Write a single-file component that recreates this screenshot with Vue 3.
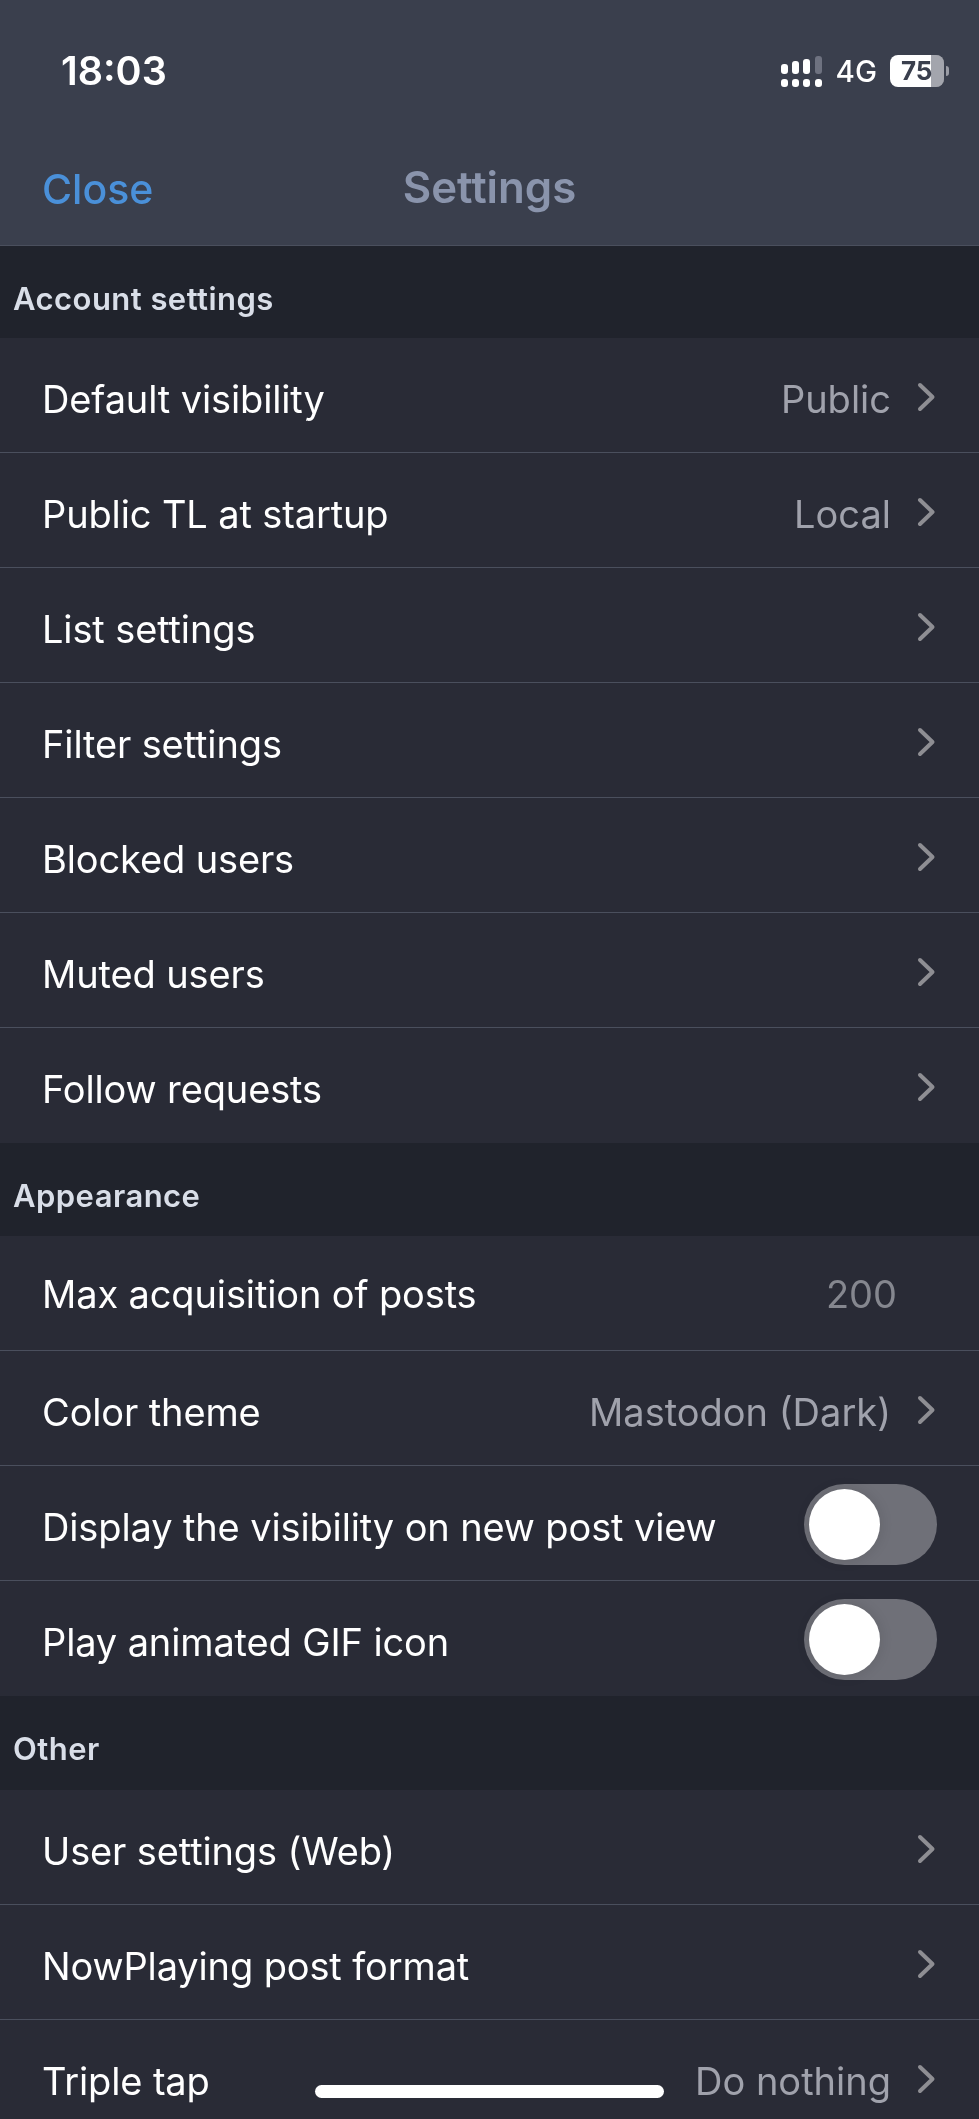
<script setup>
const groups = [
  { title: 'Account settings', rows: [
    { label: 'Default visibility', value: 'Public', chevron: true },
    { label: 'Public TL at startup', value: 'Local', chevron: true },
    { label: 'List settings', chevron: true },
    { label: 'Filter settings', chevron: true },
    { label: 'Blocked users', chevron: true },
    { label: 'Muted users', chevron: true },
    { label: 'Follow requests', chevron: true },
  ]},
  { title: 'Appearance', rows: [
    { label: 'Max acquisition of posts', input: '200' },
    { label: 'Color theme', value: 'Mastodon (Dark)', chevron: true },
    { label: 'Display the visibility on new post view', toggle: true },
    { label: 'Play animated GIF icon', toggle: true },
  ]},
  { title: 'Other', rows: [
    { label: 'User settings (Web)', chevron: true },
    { label: 'NowPlaying post format', chevron: true },
    { label: 'Triple tap', value: 'Do nothing', chevron: true },
  ]},
]
const dots = [0, 1, 2, 3]
</script>

<template>
  <div class="screen">
    <header class="head">
      <div class="status">
        <span class="time">18:03</span>
        <div class="indicators">
          <div class="signal">
            <div v-for="d in dots" :key="d" class="col">
              <i class="bar" :class="'b' + d"></i>
              <i class="dot"></i>
            </div>
          </div>
          <span class="net">4G</span>
          <div class="battery">
            <span class="pct">75</span>
            <i class="rest"></i>
          </div>
          <i class="cap"></i>
        </div>
      </div>
      <nav class="nav">
        <span class="close">Close</span>
        <span class="title">Settings</span>
      </nav>
    </header>

    <section v-for="g in groups" :key="g.title">
      <h2 class="section">{{ g.title }}</h2>
      <div v-for="r in g.rows" :key="r.label" class="row" :class="{ 'has-input': r.input }">
        <span class="label">{{ r.label }}</span>
        <span v-if="r.value" class="value">{{ r.value }}</span>
        <span v-if="r.input" class="input">{{ r.input }}</span>
        <svg v-if="r.chevron" class="chev" viewBox="0 0 20 32" width="20" height="32">
          <path d="M4 4 L16.5 16 L4 28" fill="none" stroke="#8e8e93" stroke-width="4" stroke-linecap="round" stroke-linejoin="round" />
        </svg>
        <div v-if="r.toggle" class="toggle"><i class="knob"></i></div>
      </div>
    </section>

    <div class="home"></div>
  </div>
</template>

<style>
html, body { margin: 0; background: #292b36; }
</style>

<style scoped>
.screen {
  position: relative;
  width: 979px;
  height: 2119px;
  overflow: hidden;
  background: #292b36;
  font-family: Inter, "Liberation Sans", sans-serif;
  color: #fff;
}
.head {
  height: 246px;
  box-sizing: border-box;
  background: #3a3f4d;
  border-bottom: 1px solid #4a4f5d;
}
.status {
  height: 142px;
  display: flex;
  justify-content: space-between;
  padding: 48px 30px 0 61px;
  box-sizing: border-box;
}
.time { font-size: 39.5px; font-weight: 600; line-height: 46px; }
.indicators { display: flex; align-items: center; height: 46px; }
.signal { display: flex; gap: 4.2px; align-items: flex-end; }
.col { display: flex; flex-direction: column; align-items: center; gap: 5px; width: 7px; }
.bar { display: block; width: 7px; background: #fff; border-radius: 3px; }
.b0 { height: 10px; }
.b1 { height: 13px; }
.b2 { height: 15px; }
.b3 { height: 18px; background: #6e7280; }
.dot { display: block; width: 7px; height: 8px; background: #fff; border-radius: 3px; }
.net { margin-left: 14px; font-size: 29.5px; font-weight: 500; }
.battery {
  position: relative;
  margin-left: 13px;
  width: 54px;
  height: 32px;
  background: #fff;
  border-radius: 8px;
  overflow: hidden;
}
.pct {
  position: absolute;
  left: 11px;
  top: 0;
  line-height: 32px;
  font-size: 26px;
  font-weight: 700;
  color: #3a3f4d;
}
.rest { position: absolute; right: 0; top: 0; bottom: 0; width: 13px; background: #a3a5ad; mix-blend-mode: multiply; }
.cap { display: block; width: 3px; height: 10px; margin-left: 2px; background: #9a9ca5; border-radius: 0 3px 3px 0; }
.nav { position: relative; height: 103px; }
.close {
  position: absolute;
  left: 42px;
  top: 22px;
  line-height: 50px;
  font-size: 41px;
  font-weight: 500;
  color: #4a90d9;
}
.title {
  position: absolute;
  left: 0;
  right: 0;
  top: 21px;
  text-align: center;
  line-height: 50px;
  font-size: 43.8px;
  font-weight: 600;
  color: #8a94ac;
}
.section {
  margin: 0;
  height: 92px;
  box-sizing: border-box;
  padding: 0 13px;
  background: #20232c;
  font-size: 31px;
  letter-spacing: 0.45px;
  font-weight: 600;
  line-height: 106px;
  color: #d9dee8;
}
section:nth-of-type(2) .section { height: 93px; }
section:nth-of-type(3) .section { height: 94px; }
.row {
  height: 115px;
  box-sizing: border-box;
  display: flex;
  align-items: center;
  padding: 0 42px 0 42px;
  border-bottom: 1px solid #4a4f5d;
}
.row:last-child { border-bottom-color: transparent; }
.label {
  flex: 1;
  margin-top: 8px;
  font-size: 38px;
  letter-spacing: -0.13px;
  font-weight: 400;
  color: #fff;
  white-space: nowrap;
}
.has-input .label { margin-top: 2px; }
.value { margin-top: 8px; font-size: 38px; color: #a0a2ac; white-space: nowrap; margin-right: 25px; }
.input { margin-top: 2px; font-size: 38px; color: #85878f; margin-right: 40px; }
.chev { flex: none; margin-top: 3px; margin-right: 1px; }
.toggle {
  position: relative;
  width: 133px;
  height: 81px;
  margin-top: 3px;
  border-radius: 41px;
  background: #6f7078;
}
.knob {
  position: absolute;
  left: 5px;
  top: 5px;
  width: 71px;
  height: 71px;
  border-radius: 50%;
  background: #fff;
  box-shadow: 0 0 14px rgba(0, 0, 0, 0.12);
}
.home {
  position: absolute;
  left: 315px;
  top: 2085px;
  width: 349px;
  height: 13px;
  border-radius: 7px;
  background: #fff;
}
</style>
